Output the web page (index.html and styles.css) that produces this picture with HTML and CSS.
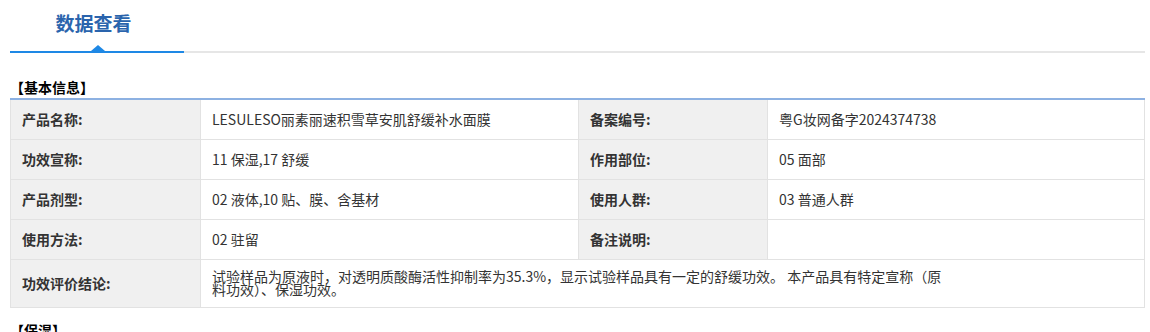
FILE: index.html
```html
<!DOCTYPE html>
<html lang="zh-CN">
<head>
<meta charset="utf-8">
<title>数据查看</title>
<link rel="stylesheet" href="styles.css">
</head>
<body>
<div class="page">
  <div class="tabs">
    <div class="tab active"><span class="tab-text">数据查看</span></div>
  </div>

  <div class="section">
    <div class="section-title">【基本信息】</div>
    <table class="info">
      <colgroup>
        <col class="c-label"><col class="c-value"><col class="c-label2"><col>
      </colgroup>
      <tr>
        <th>产品名称:</th><td>LESULESO丽素丽速积雪草安肌舒缓补水面膜</td>
        <th>备案编号:</th><td>粤G妆网备字2024374738</td>
      </tr>
      <tr>
        <th>功效宣称:</th><td>11 保湿,17 舒缓</td>
        <th>作用部位:</th><td>05 面部</td>
      </tr>
      <tr>
        <th>产品剂型:</th><td>02 液体,10 贴、膜、含基材</td>
        <th>使用人群:</th><td>03 普通人群</td>
      </tr>
      <tr>
        <th>使用方法:</th><td>02 驻留</td>
        <th>备注说明:</th><td></td>
      </tr>
      <tr class="tall">
        <th>功效评价结论:</th>
        <td colspan="3"><div class="conclusion">试验样品为原液时，对透明质酸酶活性抑制率为35.3%，显示试验样品具有一定的舒缓功效。 本产品具有特定宣称（原料功效）、保湿功效。</div></td>
      </tr>
    </table>
  </div>

  <div class="section">
    <div class="section-title">【保湿】</div>
  </div>
</div>
</body>
</html>
```

FILE: styles.css
```css
* { box-sizing: border-box; }
html, body { margin: 0; padding: 0; background: #fff; }
body {
  font-family: "Microsoft YaHei", "Noto Sans CJK SC", sans-serif;
  color: #333;
  font-size: 14px;
}
.page { padding: 0 5px 0 10px; }

.tabs {
  height: 53px;
  border-bottom: 2px solid #e6e6e6;
  display: flex;
}
.tab {
  position: relative;
  width: 174px;
  margin-bottom: -2px;
  border-bottom: 2px solid #1e88e5;
  color: #2a64ad;
  font-size: 19px;
  font-weight: bold;
  text-align: center;
  line-height: 24px;
  padding-top: 11px;
  padding-right: 7px;
}
.tab.active::after {
  content: "";
  position: absolute;
  left: 81px;
  bottom: 0;
  border-left: 7px solid transparent;
  border-right: 7px solid transparent;
  border-bottom: 6px solid #1e88e5;
}

.section { margin-top: 25px; }
.section + .section { margin-top: 13px; }
.section-title {
  font-weight: bold;
  color: #000;
  font-size: 14px;
  line-height: 18px;
  height: 20px;
}

.info {
  width: 100%;
  border-collapse: collapse;
  border-top: 2px solid #8db1e2;
  table-layout: fixed;
}
.c-label { width: 190px; }
.c-value { width: 378px; }
.c-label2 { width: 189px; }
.info th, .info td {
  border: 1px solid #e2e2e2;
  height: 40px;
  padding: 0 11px;
  text-align: left;
  vertical-align: middle;
  font-size: 14px;
}
.info tr:first-child th, .info tr:first-child td { border-top: 0; }
.info th {
  background: #f0f0f0;
  font-weight: bold;
  color: #333;
}
.info td { color: #333; }
.info tr.tall th, .info tr.tall td { height: 48px; }
.conclusion {
  max-width: 736px;
  line-height: 13px;
}
```
